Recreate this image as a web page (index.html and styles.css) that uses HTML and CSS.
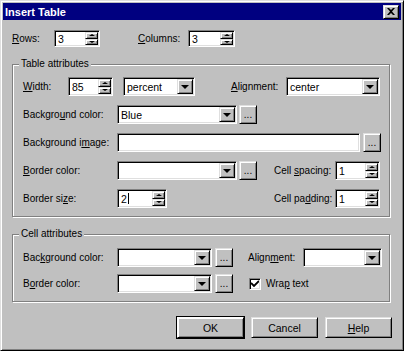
FILE: index.html
```html
<!DOCTYPE html>
<html lang="en">
<head>
    <meta charset="UTF-8">
    <title>Insert Table</title>
    <link rel="stylesheet" href="styles.css">
</head>
<body>

    <div class="dialog">
        <div class="titlebar">
            <span class="title">Insert Table</span>
            <span class="close">
                <svg width="8" height="7" viewBox="0 0 8 7"><path d="M0 0h2l2 2 2-2h2L5 3.5 8 7H6L4 5 2 7H0l3-3.5z" fill="#000"/></svg>
            </span>
        </div>

        <div class="body">
            <!-- Rows / Columns -->
            <div class="row top-row">
                <span class="lbl w-rows"><u>R</u>ows:</span>
                <div class="box spin w-46">
                    <span class="val">3</span>
                    <span class="spin-btns"><i class="up"></i><i class="down"></i></span>
                </div>
                <span class="lbl w-cols"><u>C</u>olumns:</span>
                <div class="box spin w-47">
                    <span class="val">3</span>
                    <span class="spin-btns"><i class="up"></i><i class="down"></i></span>
                </div>
            </div>

            <!-- Table attributes -->
            <fieldset class="group table-group">
                <legend>Table attributes</legend>

                <div class="row">
                    <span class="lbl w-width"><u>W</u>idth:</span>
                    <div class="box spin w-45">
                        <span class="val">85</span>
                        <span class="spin-btns"><i class="up"></i><i class="down"></i></span>
                    </div>
                    <div class="box select w-72 ml-10">
                        <span class="val">percent</span>
                        <span class="arrow"></span>
                    </div>
                    <span class="lbl w-align ml-36"><u>A</u>lignment:</span>
                    <div class="box select w-94">
                        <span class="val">center</span>
                        <span class="arrow"></span>
                    </div>
                </div>

                <div class="row">
                    <span class="lbl w-long">Backgro<u>u</u>nd color:</span>
                    <div class="box select w-120">
                        <span class="val">Blue</span>
                        <span class="arrow"></span>
                    </div>
                    <span class="dots ml-2">...</span>
                </div>

                <div class="row">
                    <span class="lbl w-long">Background i<u>m</u>age:</span>
                    <div class="box w-243"></div>
                    <span class="dots ml-3">...</span>
                </div>

                <div class="row">
                    <span class="lbl w-long"><u>B</u>order color:</span>
                    <div class="box select w-120">
                        <span class="val"></span>
                        <span class="arrow"></span>
                    </div>
                    <span class="dots ml-2">...</span>
                    <span class="lbl w-cell ml-17">Cell <u>s</u>pacing:</span>
                    <div class="box spin w-45">
                        <span class="val">1</span>
                        <span class="spin-btns"><i class="up"></i><i class="down"></i></span>
                    </div>
                </div>

                <div class="row">
                    <span class="lbl w-long">Border si<u>z</u>e:</span>
                    <div class="box spin w-50">
                        <span class="val">2<span class="caret"></span></span>
                        <span class="spin-btns"><i class="up"></i><i class="down"></i></span>
                    </div>
                    <span class="lbl w-cell ml-107">Cell pa<u>d</u>ding:</span>
                    <div class="box spin w-45">
                        <span class="val">1</span>
                        <span class="spin-btns"><i class="up"></i><i class="down"></i></span>
                    </div>
                </div>
            </fieldset>

            <!-- Cell attributes -->
            <fieldset class="group cell-group">
                <legend>Cell attributes</legend>

                <div class="row">
                    <span class="lbl w-long">Bac<u>k</u>ground color:</span>
                    <div class="box select w-95">
                        <span class="val"></span>
                        <span class="arrow"></span>
                    </div>
                    <span class="dots ml-3">...</span>
                    <span class="lbl w-align ml-15">Align<u>m</u>ent:</span>
                    <div class="box select w-79">
                        <span class="val"></span>
                        <span class="arrow"></span>
                    </div>
                </div>

                <div class="row">
                    <span class="lbl w-long">B<u>o</u>rder color:</span>
                    <div class="box select w-95">
                        <span class="val"></span>
                        <span class="arrow"></span>
                    </div>
                    <span class="dots ml-3">...</span>
                    <span class="check ml-16">
                        <svg width="8" height="7" viewBox="0 0 8 7"><path d="M0 3l3 3 5-5" stroke="#000" stroke-width="1.8" fill="none"/></svg>
                    </span>
                    <span class="check-lbl">Wra<u>p</u> text</span>
                </div>
            </fieldset>

            <div class="buttons">
                <span class="btn default">OK</span>
                <span class="btn">Cancel</span>
                <span class="btn"><u>H</u>elp</span>
            </div>
        </div>
    </div>

</body>
</html>
```

FILE: styles.css
```css
* {
    box-sizing: border-box;
}

body {
    margin: 0;
    font-family: "Liberation Sans", Arial, sans-serif;
    font-size: 10px;
    color: #000;
    background: #c0c0c0;
}

u {
    text-decoration: underline;
    text-underline-offset: 1px;
}

.dialog {
    width: 404px;
    height: 351px;
    padding: 2px;
    background: #c0c0c0;
    border: 1px solid;
    border-color: #dfdfdf #000 #000 #dfdfdf;
    box-shadow: inset 1px 1px #fff, inset -1px -1px #808080;
}

/* title bar */
.titlebar {
    height: 17px;
    padding: 0 2px;
    background: #000080;
    color: #fff;
    display: flex;
    align-items: center;
    justify-content: space-between;
}

.title {
    font-weight: bold;
    font-size: 11px;
}

.close {
    width: 16px;
    height: 14px;
    display: flex;
    align-items: center;
    justify-content: center;
}

/* raised look shared by small buttons */
.close, .arrow, .spin-btns i, .dots, .btn {
    background: #c0c0c0;
    border: 1px solid;
    border-color: #dfdfdf #000 #000 #dfdfdf;
    box-shadow: inset 1px 1px #fff, inset -1px -1px #808080;
}

.body {
    padding: 10px 9px 0;
}

.row {
    display: flex;
    align-items: center;
}

.top-row {
    height: 17px;
}

.top-row .box {
    height: 17px;
}

.lbl {
    flex: none;
    white-space: nowrap;
}

/* label widths */
.w-rows { width: 42px; }
.w-cols { width: 50px; margin-left: 38px; }
.w-width { width: 45px; }
.w-align { width: 55px; }
.w-long { width: 94px; }
.w-cell { width: 61px; }

/* field widths */
.w-45 { width: 45px; }
.w-46 { width: 46px; }
.w-47 { width: 47px; }
.w-50 { width: 50px; }
.w-72 { width: 72px; }
.w-79 { width: 79px; }
.w-94 { width: 94px; }
.w-95 { width: 95px; }
.w-120 { width: 120px; }
.w-243 { width: 243px; }

.ml-2 { margin-left: 2px; }
.ml-3 { margin-left: 3px; }
.ml-10 { margin-left: 10px; }
.ml-15 { margin-left: 15px; }
.ml-16 { margin-left: 16px; }
.ml-17 { margin-left: 17px; }
.ml-36 { margin-left: 36px; }
.ml-107 { margin-left: 107px; }

/* sunken field */
.box {
    flex: none;
    height: 19px;
    display: flex;
    background: #fff;
    border: 1px solid;
    border-color: #808080 #fff #fff #808080;
    box-shadow: inset 1px 1px #000, inset -1px -1px #dfdfdf;
}

.val {
    flex: 1;
    padding-left: 3px;
    display: flex;
    align-items: center;
    font-size: 10.5px;
}

.caret {
    display: inline-block;
    width: 1px;
    height: 11px;
    margin-left: 1px;
    background: #000;
}

.arrow {
    width: 16px;
    margin: 1px 1px 1px 0;
    display: flex;
    align-items: center;
    justify-content: center;
}

.arrow::after {
    content: "";
    border-left: 4px solid transparent;
    border-right: 4px solid transparent;
    border-top: 4px solid #000;
}

.spin-btns {
    width: 13px;
    margin: 1px 1px 1px 0;
    display: flex;
    flex-direction: column;
}

.spin-btns i {
    flex: 1;
    display: flex;
    align-items: center;
    justify-content: center;
}

.spin-btns .up::after {
    content: "";
    border-left: 3px solid transparent;
    border-right: 3px solid transparent;
    border-bottom: 2px solid #000;
}

.spin-btns .down::after {
    content: "";
    border-left: 3px solid transparent;
    border-right: 3px solid transparent;
    border-top: 2px solid #000;
}

.dots {
    flex: none;
    width: 18px;
    height: 19px;
    display: flex;
    align-items: flex-end;
    justify-content: center;
    padding-bottom: 4px;
    line-height: 8px;
}

/* groups */
.group {
    margin: 11px 0 0;
    width: 378px;
    min-width: 0;
    border: 1px solid #808080;
    box-shadow: inset 1px 1px #fff, 1px 1px #fff;
}

.table-group {
    padding: 7px 0 8px 10px;
}

.cell-group {
    padding: 8px 0 8px 10px;
}

.group legend {
    margin-left: -4px;
    padding: 0 2px;
    line-height: 12px;
    background: #c0c0c0;
}

.group .row {
    height: 19px;
}

.table-group .row + .row {
    margin-top: 9px;
}

.cell-group .row + .row {
    margin-top: 7px;
}

.check {
    flex: none;
    width: 12px;
    height: 12px;
    display: flex;
    align-items: center;
    justify-content: center;
    background: #fff;
    border: 1px solid;
    border-color: #808080 #fff #fff #808080;
    box-shadow: inset 1px 1px #000, inset -1px -1px #dfdfdf;
}

.check-lbl {
    margin-left: 5px;
}

/* dialog buttons */
.buttons {
    margin-top: 15px;
    display: flex;
    justify-content: flex-end;
    gap: 7px;
}

.btn {
    width: 67px;
    height: 21px;
    display: flex;
    align-items: center;
    justify-content: center;
    font-size: 10.5px;
}

.btn.default {
    outline: 1px solid #000;
    border-color: #fff #000 #000 #fff;
}
```
